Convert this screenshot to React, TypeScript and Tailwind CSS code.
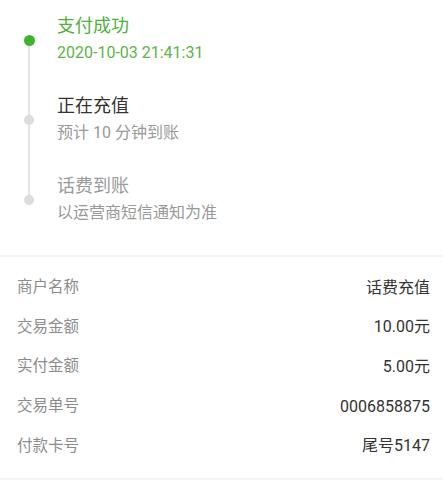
const FONT = 'font-["Roboto","Noto_Sans_CJK_SC",sans-serif]';

type Step = { title: string; sub: string; state: 'done' | 'doing' | 'todo' };

const STEPS: Step[] = [
  { title: '支付成功', sub: '2020-10-03 21:41:31', state: 'done' },
  { title: '正在充值', sub: '预计 10 分钟到账', state: 'doing' },
  { title: '话费到账', sub: '以运营商短信通知为准', state: 'todo' },
];

const ROWS: [string, string][] = [
  ['商户名称', '话费充值'],
  ['交易金额', '10.00元'],
  ['实付金额', '5.00元'],
  ['交易单号', '0006858875'],
  ['付款卡号', '尾号5147'],
];

function TimelineItem({ step }: { step: Step }) {
  const titleColor = step.state === 'done' ? 'text-[#4fb03c]' : step.state === 'doing' ? 'text-[#333333]' : 'text-[#9a9a9a]';
  const subColor = step.state === 'done' ? 'text-[#5bb547]' : 'text-[#999999]';
  return (
    <div className="flex h-[80px]">
      <div className="relative w-[57px] shrink-0">
        <span
          className={
            step.state === 'done'
              ? 'absolute left-[23.5px] top-[20.5px] h-[11px] w-[11px] rounded-full bg-[#3fb22f]'
              : 'absolute left-[24px] top-[21px] h-[10px] w-[10px] rounded-full bg-[#dcdcdc]'
          }
        />
      </div>
      <div className="flex flex-col">
        <p className={`text-[18px] leading-[24px] ${titleColor}`}>{step.title}</p>
        <p className={`mt-[5px] text-[16px] leading-[20px] ${subColor}`}>{step.sub}</p>
      </div>
    </div>
  );
}

export default function App() {
  return (
    <div className={`h-[484px] w-[443px] overflow-hidden bg-white ${FONT}`}>
      {/* progress */}
      <div className="relative h-[255px] pt-[14px]">
        <div className="absolute left-[28px] top-[40px] h-[161px] w-[2px] bg-[#e2e2e2]" />
        {STEPS.map((s) => (
          <TimelineItem key={s.title} step={s} />
        ))}
      </div>
      <div className="h-[2px] bg-[#f4f4f4]" />

      {/* detail rows */}
      <div className="px-[17px] pt-[11px]">
        {ROWS.map(([label, value]) => (
          <div key={label} className="flex h-[39.6px] items-center justify-between">
            <span className="text-[15.5px] text-[#8c8c8c]">{label}</span>
            <span className="mr-[-4px] text-[16px] text-[#333333]">{value}</span>
          </div>
        ))}
      </div>
      <div className="mt-[12px] h-[2px] bg-[#f4f4f4]" />
    </div>
  );
}
